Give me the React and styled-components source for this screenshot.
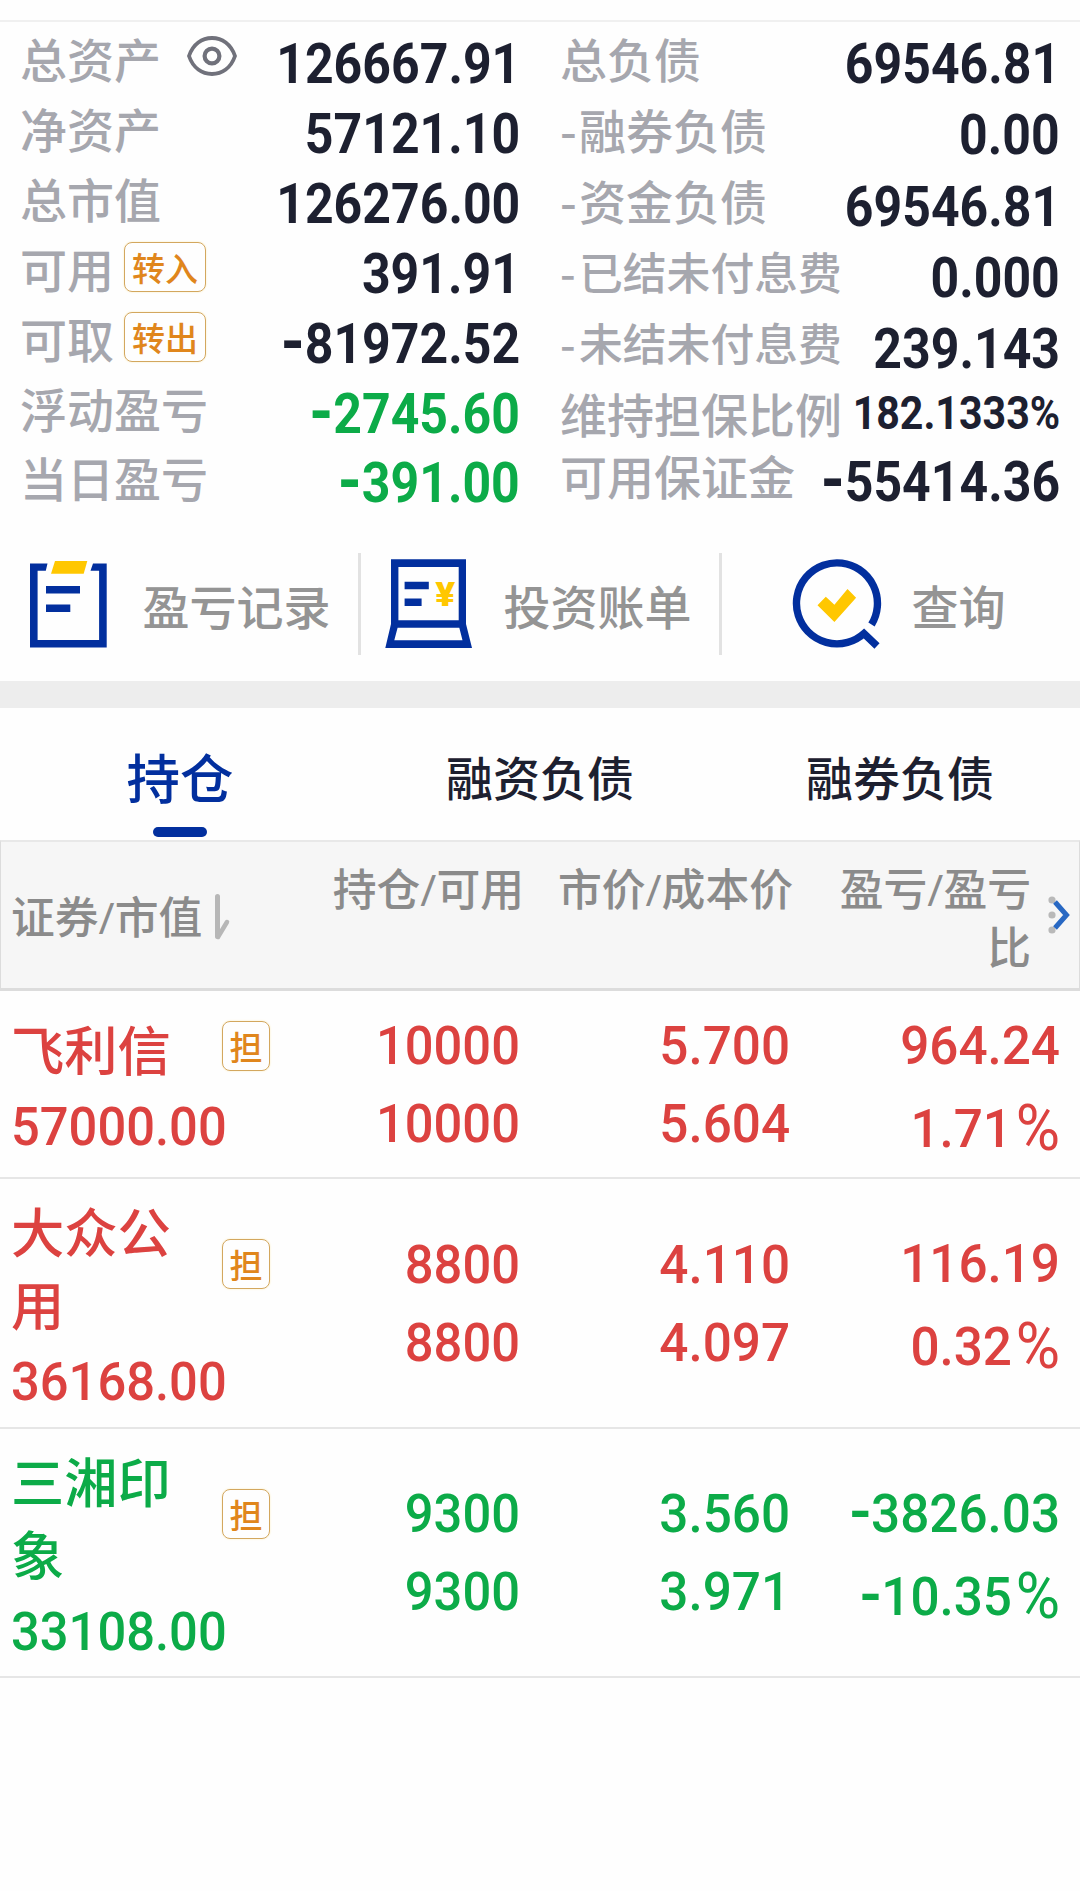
import React, { useState } from 'react';
import styled, { createGlobalStyle } from 'styled-components';

const colors = {
  navy: '#022f9e',
  yellow: '#ffc700',
  ink: '#1d2030',
  label: '#a6a7ae',
  gray: '#949494',
  head: '#8b8b8b',
  up: '#dc4240',
  down: '#0cab48',
  orange: '#e0861c',
};

const GlobalStyle = createGlobalStyle`
  * { box-sizing: border-box; }
  body {
    margin: 0;
    background: #fefefe;
    font-family: "Noto Sans CJK SC", sans-serif;
    font-weight: 500;
  }
`;

const Page = styled.main`
  width: 1080px;
  min-height: 1891px;
  padding-top: 20px;
  background: #fefefe;
`;

// Summary of the account
const Summary = styled.section`
  display: grid;
  grid-template-columns: repeat(2, minmax(0, 1fr));
  height: 533px;
  padding-top: 7px;
  border-top: 2px solid #f0f0f0;
`;

const SummaryColumn = styled.div`
  padding: 0 20px;
`;

const SummaryRow = styled.div`
  display: flex;
  align-items: center;
  justify-content: space-between;
  height: ${({ $height }) => $height || 70}px;
`;

const Label = styled.div`
  display: flex;
  align-items: center;
  flex: 0 1 auto;
  min-width: 0;
  margin-bottom: ${({ $raised }) => ($raised ? 7 : 13)}px;
  color: ${colors.label};
  font-size: ${({ $tight }) => ($tight ? 43.8 : 47)}px;
  line-height: 56px;
  white-space: nowrap;
`;

const Dash = styled.span`
  flex: none;
  width: 19px;
`;

const Value = styled.div`
  flex: none;
  margin-bottom: ${({ $small }) => ($small ? 7 : 0)}px;
  color: ${({ $color }) => $color || colors.ink};
  font-family: Roboto, sans-serif;
  font-size: ${({ $small }) => ($small ? 47 : 56)}px;
  font-weight: 700;
  line-height: 56px;
  white-space: nowrap;
  transform: scaleX(${({ $small }) => ($small ? 0.875 : 0.893)});
  transform-origin: right center;
`;

const Minus = styled.span`
  font-size: 1.22em;
  line-height: 0;
  vertical-align: -2px;
`;

const Tag = styled.span`
  display: inline-flex;
  align-items: center;
  justify-content: center;
  flex: none;
  width: ${({ $wide }) => ($wide ? 82 : 48)}px;
  height: 50px;
  border: 1px solid #d3a75e;
  border-radius: 8px;
  box-shadow: 0 0 2px #fbeab5;
  color: ${colors.orange};
  font-size: 33px;
  font-weight: 500;
  line-height: 46px;
`;

const TransferTag = styled(Tag)`
  margin: 0 0 2px 10px;
`;

const EyeIcon = styled.svg`
  width: 52px;
  height: 42px;
  margin: 0 0 4px 25px;
`;

// Shortcuts below the summary
const Actions = styled.nav`
  display: grid;
  grid-template-columns: 361px 361px 358px;
  height: 102px;
`;

const Action = styled.a`
  display: flex;
  align-items: center;
  justify-content: center;
  gap: 30px;
  padding-right: 5px;
  border-right: ${({ $last }) => ($last ? 0 : 3)}px solid #e2e2e2;
  color: ${colors.gray};
  font-size: 47px;
  line-height: 60px;

  svg {
    width: 90px;
    height: 90px;
  }
`;

const ActionText = styled.span`
  padding-top: 2px;
`;

const Band = styled.div`
  height: 27px;
  margin-top: 26px;
  background: #ededed;
`;

const Tabs = styled.div`
  display: grid;
  grid-template-columns: repeat(3, 1fr);
  height: 132px;
`;

const Tab = styled.button`
  display: flex;
  flex-direction: column;
  align-items: center;
  justify-content: space-between;
  padding: 33px 0 3px;
  border: 0;
  background: none;
  color: ${({ $active }) => ($active ? colors.navy : colors.ink)};
  font-family: inherit;
  font-size: ${({ $active }) => ($active ? 53.5 : 47)}px;
  font-weight: 500;
  line-height: 70px;

  &::after {
    content: '';
    width: 54px;
    height: 10px;
    border-radius: 5px;
    background: ${({ $active }) => ($active ? colors.navy : 'transparent')};
  }
`;

// Table of positions
const TableHead = styled.div`
  display: grid;
  grid-template-columns: 269px 254px 269px 238px 1fr;
  height: 151px;
  padding-top: 18px;
  border: 1px solid #dcdcdc;
  border-width: 2px 1px 3px;
  border-top-color: #e8e8e8;
  background: #f6f6f6;
  color: ${colors.head};
  font-family: "Open Sans", "Noto Sans CJK SC", sans-serif;
  font-size: 43.8px;
  line-height: 58px;
`;

const HeadCell = styled.div`
  padding-left: 14px;
  text-align: right;
`;

const SortCell = styled.div`
  display: flex;
  align-items: center;
  height: 116px;
  padding: 0 0 2px 10px;
  white-space: nowrap;

  svg {
    width: 18px;
    height: 50px;
    margin: 0 0 0 11px;
  }
`;

const MoreCell = styled.div`
  padding: 35px 0 0 17px;
  line-height: 0;
`;

const Row = styled.div`
  display: grid;
  grid-template-columns: 270px 250px 270px 270px;
  align-items: center;
  height: ${({ $tall }) => ($tall ? 249.5 : 188)}px;
  border-bottom: 2px solid #e6e6e6;
  color: ${({ $color }) => $color};
`;

const Stock = styled.div`
  padding: 8px 0 0 11px;
`;

const StockTop = styled.div`
  display: flex;
  align-items: center;
  justify-content: space-between;
`;

const StockName = styled.div`
  width: 164px;
  font-size: 53.3px;
  line-height: 73px;
`;

const GuaranteeTag = styled(Tag)`
  margin-bottom: 4px;
`;

const Figures = styled.div`
  padding-top: ${({ $offset }) => $offset || 0}px;
  text-align: right;
`;

const Figure = styled.div`
  margin-top: ${({ $gap }) => $gap || 0}px;
  font-family: Roboto, sans-serif;
  font-size: 54.5px;
  font-weight: 500;
  line-height: 78px;
  white-space: nowrap;
  transform: scaleX(${({ $narrow }) => ($narrow ? 0.93 : 0.94)});
  transform-origin: ${({ $left }) => ($left ? 'left' : 'right')} center;
`;

const Percent = styled.span`
  margin-left: 4px;
  font-size: 1.18em;
  font-weight: 400;
  line-height: 0;
  vertical-align: -3px;
`;

const Eye = () => (
  <EyeIcon viewBox="0 0 52 42" fill="none" stroke="#70717b" strokeWidth="3.8">
    <path d="M3 21C7 9 16 3 26 3s19 6 23 18c-4 12-13 18-23 18S7 33 3 21z" />
    <circle cx="26" cy="21" r="7.4" strokeWidth="4.2" />
  </EyeIcon>
);

const RecordIcon = () => (
  <svg viewBox="22 559 90 90">
    <path
      d="M46.5 563.5H29v84h76.7v-84H92l-2.5 7.3h8.6v69.3H36.6v-69.3h8.2z"
      fill={colors.navy}
    />
    <path d="M54 561h32.3l-3.6 12.7H50z" fill={colors.yellow} />
    <path d="M45 586h34v7.5H45zM45 604.5h24.3v7.5H45z" fill={colors.navy} />
  </svg>
);

const BillIcon = () => (
  <svg viewBox="384 559 90 90">
    <path
      fillRule="evenodd"
      d="M391 559.3h75V624l6 24h-86.7l5.7-24zM398.4 567v53.3h60.3V567zM397.6 627.7l-3.3 12.6h68.2l-3.2-12.6z"
      fill={colors.navy}
    />
    <path d="M404.6 581.8h24.2v7.4h-24.2zM404.6 598.5h17v7.5h-17z" fill={colors.navy} />
    <text
      x="445.3"
      y="606"
      textAnchor="middle"
      fontFamily="Roboto, sans-serif"
      fontSize="34"
      fontWeight="900"
      textLength="20"
      lengthAdjust="spacingAndGlyphs"
      fill={colors.yellow}
    >
      ¥
    </text>
  </svg>
);

const QueryIcon = () => (
  <svg viewBox="792 559 90 90">
    <path
      d="M871.5 624.5A40.5 40.5 0 1 0 864 633.5L877 646"
      fill="none"
      stroke={colors.navy}
      strokeWidth="7.4"
    />
    <path
      d="M817.5 605.3l8.3-8.6 8.6 8L847.5 589l8.6 8.7L834.4 622z"
      fill={colors.yellow}
    />
  </svg>
);

const SortIcon = () => (
  <svg viewBox="0 0 18 50" fill="none" stroke="#b7b7b7" strokeLinecap="round">
    <path d="M4.5 4.5v40" strokeWidth="5" />
    <path d="M5 45l9-15" strokeWidth="4.5" />
  </svg>
);

const MoreIcon = () => (
  <svg width="24" height="40" viewBox="0 0 24 40">
    <g fill="#b9b9b9">
      <circle cx="4" cy="5" r="3.6" />
      <circle cx="4" cy="20" r="3.6" />
      <circle cx="4" cy="35" r="3.6" />
    </g>
    <path d="M7 7l11.5 13L7 33" fill="none" stroke="#2868c3" strokeWidth="5" />
  </svg>
);

const assets = [
  { label: '总资产', value: '126667.91', eye: true },
  { label: '净资产', value: '57121.10' },
  { label: '总市值', value: '126276.00' },
  { label: '可用', value: '391.91', tag: '转入' },
  { label: '可取', value: '-81972.52', tag: '转出' },
  { label: '浮动盈亏', value: '-2745.60', color: colors.down },
  { label: '当日盈亏', value: '-391.00', color: colors.down, height: 68 },
];

const debts = [
  { label: '总负债', value: '69546.81' },
  { label: '融券负债', value: '0.00', dash: true, height: 72 },
  { label: '资金负债', value: '69546.81', dash: true, height: 71 },
  { label: '已结未付息费', value: '0.000', dash: true, tight: true, height: 71 },
  { label: '未结未付息费', value: '239.143', dash: true, tight: true, height: 71 },
  { label: '维持担保比例', value: '182.1333%', small: true, height: 64 },
  { label: '可用保证金', value: '-55414.36', height: 67 },
];

const tabs = ['持仓', '融资负债', '融券负债'];

const positions = [
  {
    name: '飞利信',
    marketValue: '57000.00',
    amounts: ['10000', '10000'],
    prices: ['5.700', '5.604'],
    profit: '964.24',
    ratio: '1.71',
    color: colors.up,
  },
  {
    name: '大众公用',
    marketValue: '36168.00',
    amounts: ['8800', '8800'],
    prices: ['4.110', '4.097'],
    profit: '116.19',
    ratio: '0.32',
    color: colors.up,
  },
  {
    name: '三湘印象',
    marketValue: '33108.00',
    amounts: ['9300', '9300'],
    prices: ['3.560', '3.971'],
    profit: '-3826.03',
    ratio: '-10.35',
    color: colors.down,
  },
];

// Number with a wider minus sign in front
const Signed = ({ value }) =>
  value.startsWith('-') ? (
    <>
      <Minus>-</Minus>
      {value.slice(1)}
    </>
  ) : (
    value
  );

const SummaryList = ({ items }) => (
  <SummaryColumn>
    {items.map((item) => (
      <SummaryRow key={item.label} $height={item.height}>
        <Label $tight={item.tight} $raised={item.small}>
          {item.dash && <Dash>-</Dash>}
          {item.label}
          {item.eye && <Eye />}
          {item.tag && <TransferTag $wide>{item.tag}</TransferTag>}
        </Label>
        <Value $color={item.color} $small={item.small}>
          <Signed value={item.value} />
        </Value>
      </SummaryRow>
    ))}
  </SummaryColumn>
);

const App = () => {
  const [activeTab, setActiveTab] = useState(0);

  return (
    <Page>
      <GlobalStyle />
      <Summary>
        <SummaryList items={assets} />
        <SummaryList items={debts} />
      </Summary>

      <Actions>
        <Action>
          <RecordIcon />
          <ActionText>盈亏记录</ActionText>
        </Action>
        <Action>
          <BillIcon />
          <ActionText>投资账单</ActionText>
        </Action>
        <Action $last>
          <QueryIcon />
          <ActionText>查询</ActionText>
        </Action>
      </Actions>

      <Band />

      <Tabs>
        {tabs.map((tab, index) => (
          <Tab key={tab} $active={index === activeTab} onClick={() => setActiveTab(index)}>
            {tab}
          </Tab>
        ))}
      </Tabs>

      <TableHead>
        <SortCell>
          证券/市值
          <SortIcon />
        </SortCell>
        <HeadCell>持仓/可用</HeadCell>
        <HeadCell>市价/成本价</HeadCell>
        <HeadCell>盈亏/盈亏比</HeadCell>
        <MoreCell>
          <MoreIcon />
        </MoreCell>
      </TableHead>

      {positions.map((item) => (
        <Row key={item.name} $color={item.color} $tall={item.name.length > 3}>
          <Stock>
            <StockTop>
              <StockName>{item.name}</StockName>
              <GuaranteeTag>担</GuaranteeTag>
            </StockTop>
            <Figure $left $narrow $gap={3}>
              {item.marketValue}
            </Figure>
          </Stock>
          <Figures>
            <Figure $narrow>{item.amounts[0]}</Figure>
            <Figure $narrow>{item.amounts[1]}</Figure>
          </Figures>
          <Figures>
            <Figure>{item.prices[0]}</Figure>
            <Figure>{item.prices[1]}</Figure>
          </Figures>
          <Figures $offset={4}>
            <Figure>
              <Signed value={item.profit} />
            </Figure>
            <Figure $gap={5}>
              <Signed value={item.ratio} />
              <Percent>%</Percent>
            </Figure>
          </Figures>
        </Row>
      ))}
    </Page>
  );
};

export default App;
